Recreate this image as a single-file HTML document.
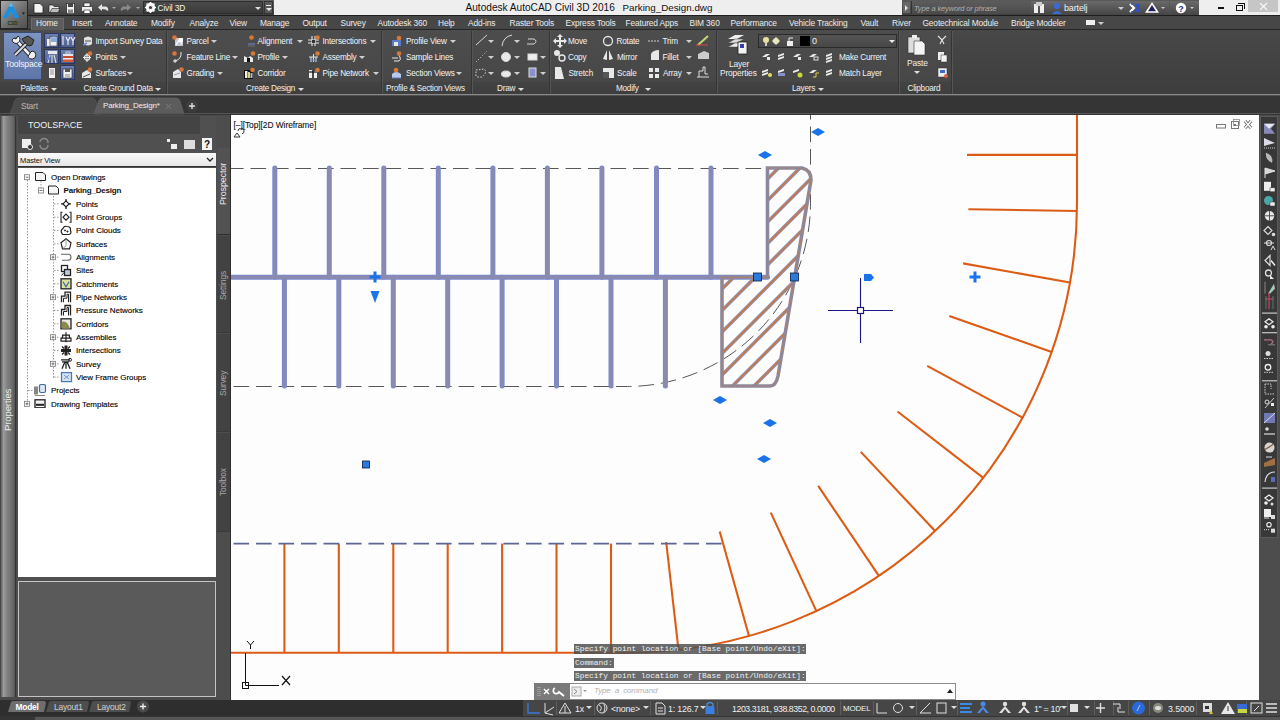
<!DOCTYPE html>
<html><head><meta charset="utf-8">
<style>
*{margin:0;padding:0;box-sizing:border-box}
html,body{width:1280px;height:720px;overflow:hidden;background:#3b3b3b;font-family:"Liberation Sans",sans-serif;}
.a{position:absolute;white-space:nowrap}
.t{position:absolute;white-space:nowrap;color:#f0f0f0;font-size:9px;line-height:10px;letter-spacing:-0.15px}
.dd{position:absolute;width:0;height:0;border-left:3px solid transparent;border-right:3px solid transparent;border-top:3px solid #d8d8d8}
</style></head><body>
<!-- title bar -->
<div class="a" style="left:0;top:0;width:1280px;height:16px;background:linear-gradient(#626262,#3e3e3e)"></div>
<div class="a" style="left:0;top:15px;width:1280px;height:1px;background:#1e1e1e"></div>
<div class="a" style="left:274px;top:0;width:628px;height:15px;background:#eeeeee"></div>
<div class="a" style="left:1199px;top:0;width:81px;height:15px;background:#eeeeee"></div>
<div class="a" style="left:1248px;top:0;width:30px;height:12px;background:#c6c6c6"></div>
<svg class="a" style="left:1258px;top:1px" width="11" height="11" viewBox="0 0 11 11"><path d="M2 2 L9 9 M9 2 L2 9" stroke="#f6f6f6" stroke-width="1.3"/></svg>
<div class="a" style="left:1218px;top:7px;width:6px;height:2px;background:#111"></div>
<div class="a" style="left:1236px;top:5px;width:7px;height:6px;border:1.5px solid #111"></div>
<div class="a" style="left:1238px;top:3px;width:7px;height:6px;border-top:1.5px solid #111;border-right:1.5px solid #111"></div>
<div class="t" style="left:465.5px;top:2px;font-size:10.1px;line-height:12px;color:#111;letter-spacing:0">Autodesk AutoCAD Civil 3D 2016</div>
<div class="t" style="left:622.5px;top:2px;font-size:9.8px;line-height:12px;color:#111;letter-spacing:0">Parking_Design.dwg</div>
<!-- app button -->
<div class="a" style="left:0;top:0;width:28px;height:29px;background:linear-gradient(135deg,#a8a8a8,#6a6a6a 60%,#505050);border:1px solid #252525"></div>
<svg class="a" style="left:0px;top:0px" width="28" height="28" viewBox="0 0 28 28"><path d="M11 2.5 L19.5 18 L14.5 18 L11 11.5 L7.5 18 L2.5 18 Z" fill="#1d8ee0"/><path d="M11 2.5 L13 6.5 L9 6.5Z" fill="#6ac0f0"/><text x="7.5" y="24.5" font-size="5" fill="#1a3a1a" font-family="Liberation Sans" font-weight="bold">C3D</text><path d="M22 12.5 L25 12.5 L23.5 14.5Z" fill="#111"/></svg>
<!-- QAT -->
<svg class="a" style="left:30px;top:1px" width="245" height="14" viewBox="0 0 245 14">
<path d="M4 2.5 L10 2.5 L13 5.5 L13 12 L4 12Z" fill="#f4f4f4" stroke="#222" stroke-width="0.8"/>
<path d="M19 4 L23 4 L24 5.5 L29 5.5 L29 11.5 L19 11.5Z" fill="#e8e8e8" stroke="#222" stroke-width="0.7"/><path d="M20 11.5 L22 7.5 L30 7.5 L28 11.5Z" fill="#bdbdbd" stroke="#222" stroke-width="0.6"/>
<rect x="36.5" y="2.5" width="8" height="10" fill="#f0f0f0" stroke="#222" stroke-width="0.7"/><rect x="38" y="2.5" width="5" height="3.5" fill="#444"/><rect x="38" y="8.5" width="5" height="4" fill="#888"/>
<rect x="51.5" y="5.5" width="11" height="5" rx="1" fill="#eee" stroke="#222" stroke-width="0.7"/><rect x="54" y="2" width="6" height="3.5" fill="#f4f4f4" stroke="#222" stroke-width="0.6"/><rect x="54" y="9" width="6" height="3.5" fill="#fff" stroke="#222" stroke-width="0.6"/>
<path d="M68 6.5 L72 3 L72 5.5 L76 5.5 Q79 6.5 78 10 Q76 8 72 8 L72 10Z" fill="#e4e4e4"/>
<path d="M82 6 L86 6 L84 8Z" fill="#aaa"/>
<path d="M101 6.5 L97 3 L97 5.5 L93 5.5 Q90 6.5 91 10 Q93 8 97 8 L97 10Z" fill="#8a8a8a"/>
<path d="M106 6 L110 6 L108 8Z" fill="#aaa"/>
</svg>
<div class="a" style="left:143px;top:1px;width:120px;height:13px;background:linear-gradient(#4a4a4a,#3a3a3a);border:1px solid #2e2e2e"></div>
<svg class="a" style="left:145px;top:2px" width="11" height="11" viewBox="0 0 11 11"><circle cx="5.5" cy="5.5" r="3.6" fill="none" stroke="#fff" stroke-width="2.2"/><path d="M5.5 0 L5.5 11 M0 5.5 L11 5.5 M1.6 1.6 L9.4 9.4 M9.4 1.6 L1.6 9.4" stroke="#fff" stroke-width="1.6"/><circle cx="5.5" cy="5.5" r="1.6" fill="#3e3e3e"/></svg>
<div class="t" style="left:157.5px;top:2px;font-size:8.4px;line-height:12px;color:#f4f4f4">Civil 3D</div>
<div class="dd" style="left:255px;top:7px;border-top-color:#ddd"></div>
<div class="a" style="left:264px;top:1px;width:9px;height:13px;background:#5a5a5a;border:1px solid #333"></div>
<div class="a" style="left:266px;top:5px;width:5px;height:1px;background:#eee"></div>
<div class="dd" style="left:265.5px;top:8px;border-top-color:#eee"></div>
<!-- search / user -->
<div class="a" style="left:902px;top:0;width:297px;height:15px;background:linear-gradient(#5a5a5a,#404040)"></div><div class="a" style="left:1031px;top:1px;width:168px;height:14px;background:linear-gradient(#6a6a6a,#454545)"></div>
<div class="a" style="left:911px;top:1px;width:120px;height:13px;background:linear-gradient(#5c5c5c,#4a4a4a);border-left:1px solid #333"></div>
<div class="a" style="left:903px;top:2px;width:7px;height:11px;background:#666"></div>
<div class="a" style="left:905px;top:5px;border-left:3px solid #ddd;border-top:3px solid transparent;border-bottom:3px solid transparent"></div>
<div class="t" style="left:914px;top:4px;font-size:7.5px;color:#b0b0b0;font-style:italic">Type a keyword or phrase</div>

<svg class="a" style="left:1032px;top:1px" width="170" height="14" viewBox="0 0 170 14">
<rect x="2" y="3" width="4" height="9" fill="#eee"/><rect x="8" y="3" width="4" height="9" fill="#eee"/><rect x="4" y="1" width="6" height="4" fill="#ccc"/>
<circle cx="25" cy="5" r="3" fill="#3a6ad8"/><path d="M20 13 Q25 7 30 13Z" fill="#3a6ad8"/>
<path d="M98 3 L102 7 L98 11" stroke="#fff" stroke-width="2.2" fill="none"/><path d="M103 3 L108 3 L108 11 L103 11 L105 7Z" fill="#3050c8"/><path d="M99 3 L101 3 M99 11 L101 11" stroke="#3050c8" stroke-width="1.5"/>
<path d="M120 2.5 L125.5 11 L114.5 11Z" fill="#20205a" stroke="#fff" stroke-width="1.6"/><path d="M129 6 L133 6 L131 8Z" fill="#ccc"/>
<rect x="137" y="1" width="1" height="12" fill="#555"/>
<circle cx="149" cy="7" r="5.2" fill="#fff"/><text x="146.2" y="10.5" font-size="9" font-weight="bold" fill="#2a2a8a" font-family="Liberation Sans">?</text>
<path d="M158 6 L162 6 L160 8Z" fill="#ccc"/>
</svg>
<div class="t" style="left:1064px;top:3px;font-size:9px;color:#f0f0f0">bartelj</div>
<div class="dd" style="left:1118px;top:7px;border-top-color:#ccc"></div>
<!-- tabs row -->
<div class="a" style="left:28px;top:16px;width:1252px;height:14px;background:#474747"></div>
<div class="a" style="left:0;top:29px;width:1280px;height:1px;background:#262626"></div>
<div class="a" style="left:31px;top:18px;width:33px;height:12px;background:#5c5c5c;border:1px solid #6a6a6a;border-bottom:none"></div>
<div class="t" style="left:36px;top:18px;font-size:8.4px;color:#ececec">Home</div>
<div class="t" style="left:72px;top:18px;font-size:8.4px;color:#ececec">Insert</div>
<div class="t" style="left:105px;top:18px;font-size:8.4px;color:#ececec">Annotate</div>
<div class="t" style="left:151px;top:18px;font-size:8.4px;color:#ececec">Modify</div>
<div class="t" style="left:189.5px;top:18px;font-size:8.4px;color:#ececec">Analyze</div>
<div class="t" style="left:229.5px;top:18px;font-size:8.4px;color:#ececec">View</div>
<div class="t" style="left:260px;top:18px;font-size:8.4px;color:#ececec">Manage</div>
<div class="t" style="left:302.5px;top:18px;font-size:8.4px;color:#ececec">Output</div>
<div class="t" style="left:340.5px;top:18px;font-size:8.4px;color:#ececec">Survey</div>
<div class="t" style="left:377.5px;top:18px;font-size:8.4px;color:#ececec">Autodesk 360</div>
<div class="t" style="left:438px;top:18px;font-size:8.4px;color:#ececec">Help</div>
<div class="t" style="left:468px;top:18px;font-size:8.4px;color:#ececec">Add-ins</div>
<div class="t" style="left:509.5px;top:18px;font-size:8.4px;color:#ececec">Raster Tools</div>
<div class="t" style="left:565.5px;top:18px;font-size:8.4px;color:#ececec">Express Tools</div>
<div class="t" style="left:625.5px;top:18px;font-size:8.4px;color:#ececec">Featured Apps</div>
<div class="t" style="left:689.5px;top:18px;font-size:8.4px;color:#ececec">BIM 360</div>
<div class="t" style="left:730.5px;top:18px;font-size:8.4px;color:#ececec">Performance</div>
<div class="t" style="left:789px;top:18px;font-size:8.4px;color:#ececec">Vehicle Tracking</div>
<div class="t" style="left:860.5px;top:18px;font-size:8.4px;color:#ececec">Vault</div>
<div class="t" style="left:892px;top:18px;font-size:8.4px;color:#ececec">River</div>
<div class="t" style="left:922.5px;top:18px;font-size:8.4px;color:#ececec">Geotechnical Module</div>
<div class="t" style="left:1011px;top:18px;font-size:8.4px;color:#ececec">Bridge Modeler</div>
<div class="a" style="left:1086px;top:20px;width:9px;height:5px;background:#eee"></div><div class="dd" style="left:1098px;top:22px;border-top-color:#ccc"></div>
<!-- ribbon -->
<div class="a" style="left:0;top:30px;width:1280px;height:65px;background:linear-gradient(#484848,#3d3d3d)"></div>
<div class="a" style="left:0;top:30px;width:951px;height:52px;background:linear-gradient(#4d4d4d,#474747)"></div>
<div class="a" style="left:0;top:82px;width:951px;height:12px;background:linear-gradient(#434343,#3e3e3e)"></div>
<div class="a" style="left:0;top:94px;width:1280px;height:1px;background:#8a8a8a"></div><div class="a" style="left:0;top:95px;width:1280px;height:1px;background:#505050"></div>
<div class="a" style="left:166px;top:31px;width:1px;height:63px;background:#353535"></div><div class="a" style="left:167px;top:31px;width:1px;height:63px;background:#565656"></div>
<div class="a" style="left:381px;top:31px;width:1px;height:63px;background:#353535"></div><div class="a" style="left:382px;top:31px;width:1px;height:63px;background:#565656"></div>
<div class="a" style="left:470.5px;top:31px;width:1px;height:63px;background:#353535"></div><div class="a" style="left:471.5px;top:31px;width:1px;height:63px;background:#565656"></div>
<div class="a" style="left:549px;top:31px;width:1px;height:63px;background:#353535"></div><div class="a" style="left:550px;top:31px;width:1px;height:63px;background:#565656"></div>
<div class="a" style="left:716px;top:31px;width:1px;height:63px;background:#353535"></div><div class="a" style="left:717px;top:31px;width:1px;height:63px;background:#565656"></div>
<div class="a" style="left:898px;top:31px;width:1px;height:63px;background:#353535"></div><div class="a" style="left:899px;top:31px;width:1px;height:63px;background:#565656"></div>
<div class="a" style="left:951px;top:31px;width:1px;height:63px;background:#353535"></div><div class="a" style="left:952px;top:31px;width:1px;height:63px;background:#565656"></div>
<div class="a" style="left:3px;top:32px;width:39px;height:48px;background:linear-gradient(#7d93c0,#5d75a8);border:1px solid #3a4a70"></div>
<svg class="a" style="left:9px;top:34px" width="28" height="26" viewBox="0 0 28 26">
<path d="M7 6 L20 20" stroke="#222" stroke-width="4.5" stroke-linecap="round"/><path d="M7 6 L20 20" stroke="#f0f0f0" stroke-width="2.6" stroke-linecap="round"/>
<path d="M3 6 A4 4 0 1 0 9 2 L7 5 L5 4Z" fill="#f0f0f0" stroke="#222" stroke-width="1"/>
<path d="M19 22 A4 4 0 1 0 23 17 L21 19 L20 21Z" fill="#f0f0f0" stroke="#222" stroke-width="1"/>
<path d="M6 21 L18 9" stroke="#222" stroke-width="4"/><path d="M6 21 L18 9" stroke="#d8d8d8" stroke-width="2.2"/>
<path d="M13 5 L19 2 L25 6 L23 11 L20 12 L15 8Z" fill="#555" stroke="#222" stroke-width="1"/>
</svg>
<div class="a" style="left:44px;top:33px;width:15px;height:15px;background:linear-gradient(#6d80b0,#4e5f90);border:1px solid #2a3660"></div><div class="a" style="left:60px;top:33px;width:15px;height:15px;background:linear-gradient(#6d80b0,#4e5f90);border:1px solid #2a3660"></div><div class="a" style="left:44px;top:49px;width:15px;height:15px;background:linear-gradient(#6d80b0,#4e5f90);border:1px solid #2a3660"></div><div class="a" style="left:60px;top:49px;width:15px;height:15px;background:linear-gradient(#6d80b0,#4e5f90);border:1px solid #2a3660"></div><div class="a" style="left:60px;top:65px;width:15px;height:15px;background:linear-gradient(#6d80b0,#4e5f90);border:1px solid #2a3660"></div><svg class="a" style="left:44px;top:33px" width="32" height="47" viewBox="0 0 32 47">
<rect x="3" y="6" width="3" height="7" fill="#eee"/><rect x="6" y="4" width="7" height="9" fill="#f2f2f2" stroke="#333" stroke-width="0.6"/><ellipse cx="10" cy="5" rx="3" ry="1.5" fill="#9ab8e0"/><rect x="7" y="5" width="6" height="4" fill="#8aa8d8"/>
<path d="M19 3 L19 12 M22 4 L24 8 L24 12 M26 4 L24 8 M27 4 L29 8 L29 12 M31 4 L29 8" stroke="#f0f0f0" stroke-width="1.1" fill="none"/>
<rect x="4" y="18" width="9" height="3" fill="#e8e8e8"/><path d="M4 30 L6 22 M8 30 L8 22 M12 30 L10 22" stroke="#ddd" stroke-width="1.1"/><rect x="3" y="24" width="3" height="3" fill="#5a8ad8"/>
<rect x="19" y="21" width="10" height="8" fill="#e8e8e8"/><rect x="19" y="23" width="10" height="2" fill="#c84a2a"/><rect x="19" y="26.5" width="10" height="2.5" fill="#d85a3a"/><rect x="22" y="19" width="4" height="2" fill="none" stroke="#ddd" stroke-width="0.8"/>
<rect x="5" y="35" width="6" height="10" fill="#f0f0f0"/><path d="M6 37 L10 37 M6 39 L10 39 M6 41 L10 41" stroke="#555" stroke-width="0.6"/>
<rect x="19" y="36" width="9" height="9" fill="#f0f0f0" stroke="#222" stroke-width="0.6"/><rect x="21" y="36" width="5" height="3" fill="#555"/><rect x="21" y="41" width="5" height="4" fill="#bbb"/>
</svg>
<div class="a" style="left:758px;top:34px;width:139px;height:14px;background:linear-gradient(#555,#474747);border:1px solid #2a2a2a"></div>
<div class="a" style="left:800px;top:36px;width:10px;height:10px;background:#000"></div>
<div class="t" style="left:5px;top:59px;font-size:8.6px;color:#f4f4f4;">Toolspace</div>
<svg class="a" style="left:82px;top:35px" width="12" height="12" viewBox="0 0 12 12"><path d="M2 3 Q6 0 10 3 L10 9 Q6 12 2 9Z" fill="#e0e0e0"/><path d="M3 6 L9 6" stroke="#555"/><path d="M1 10 L5 8" stroke="#6a8ad0" stroke-width="1.5"/></svg>
<div class="t" style="left:95.5px;top:37px;font-size:8.2px;color:#f4f4f4;letter-spacing:-0.2px;">Import Survey Data</div>
<svg class="a" style="left:81px;top:51px" width="12" height="12" viewBox="0 0 12 12"><path d="M6 2 L6 11 M2 6.5 L10 6.5" stroke="#eee" stroke-width="1"/><circle cx="6" cy="6.5" r="2.6" fill="none" stroke="#eee" stroke-width="1.2"/><circle cx="9" cy="2.5" r="2.3" fill="#d87838"/></svg>
<div class="t" style="left:95.5px;top:53px;font-size:8.2px;color:#f4f4f4;letter-spacing:-0.2px;">Points</div>
<div class="dd" style="left:120px;top:56px;border-top-color:#d0d0d0"></div>
<svg class="a" style="left:81px;top:67px" width="12" height="12" viewBox="0 0 12 12"><path d="M1 11 L1 6 L6 3 L10 6 L10 11Z" fill="#e8e8e8"/><path d="M2 10 L9 7" stroke="#555"/><circle cx="9" cy="2.5" r="2.3" fill="#d87838"/></svg>
<div class="t" style="left:95.5px;top:69px;font-size:8.2px;color:#f4f4f4;letter-spacing:-0.2px;">Surfaces</div>
<div class="dd" style="left:127px;top:72px;border-top-color:#d0d0d0"></div>
<div class="t" style="left:20.5px;top:84px;font-size:8.2px;letter-spacing:-0.25px;color:#f0f0f0;">Palettes</div>
<div class="dd" style="left:51px;top:88px;border-top-color:#e0e0e0"></div>
<div class="t" style="left:83.5px;top:84px;font-size:8.2px;letter-spacing:-0.25px;color:#f0f0f0;">Create Ground Data</div>
<div class="dd" style="left:155px;top:88px;border-top-color:#e0e0e0"></div>
<svg class="a" style="left:172px;top:35px" width="12" height="12" viewBox="0 0 12 12"><rect x="3" y="3" width="8" height="8" fill="#c8c8d8"/><path d="M4 10 L7 5 L10 9" stroke="#fff" stroke-width="1.2" fill="none"/><rect x="7" y="3" width="4" height="4" fill="#fff"/><circle cx="2.5" cy="2.5" r="2.3" fill="#d87838"/></svg>
<div class="t" style="left:186.5px;top:37px;font-size:8.2px;color:#f4f4f4;letter-spacing:-0.2px;">Parcel</div>
<div class="dd" style="left:210.5px;top:40px;border-top-color:#d0d0d0"></div>
<svg class="a" style="left:172px;top:51px" width="12" height="12" viewBox="0 0 12 12"><path d="M9 1 Q10 8 3 10" stroke="#e8e8e8" fill="none" stroke-width="1"/><path d="M1 10 L5 10 M3 8 L3 12" stroke="#eee"/><circle cx="2.5" cy="2.5" r="2.3" fill="#d87838"/></svg>
<div class="t" style="left:186.5px;top:53px;font-size:8.2px;color:#f4f4f4;letter-spacing:-0.2px;">Feature Line</div>
<div class="dd" style="left:232px;top:56px;border-top-color:#d0d0d0"></div>
<svg class="a" style="left:172px;top:67px" width="12" height="12" viewBox="0 0 12 12"><path d="M1 11 L1 5 L6 2 L9 5 L9 11Z" fill="#e8e8e8"/><path d="M2 8 L8 6" stroke="#999"/><circle cx="9.5" cy="2.5" r="2.3" fill="#d87838"/></svg>
<div class="t" style="left:186.5px;top:69px;font-size:8.2px;color:#f4f4f4;letter-spacing:-0.2px;">Grading</div>
<div class="dd" style="left:217px;top:72px;border-top-color:#d0d0d0"></div>
<svg class="a" style="left:244px;top:35px" width="12" height="12" viewBox="0 0 12 12"><path d="M4 9 L11 9" stroke="#6a7ab8" stroke-width="1.3"/><path d="M4 11 L11 11" stroke="#888" stroke-width="0.6"/><circle cx="7.5" cy="2.5" r="2.3" fill="#d87838"/></svg>
<div class="t" style="left:257.5px;top:37px;font-size:8.2px;color:#f4f4f4;letter-spacing:-0.2px;">Alignment</div>
<div class="dd" style="left:297px;top:40px;border-top-color:#d0d0d0"></div>
<svg class="a" style="left:244px;top:51px" width="12" height="12" viewBox="0 0 12 12"><path d="M0 11 L0 5 L4 7 L6 5 L9 7 L9 11Z" fill="#e8e8e8"/><rect x="3" y="7" width="3" height="4" fill="#111"/><circle cx="9" cy="2.5" r="2.3" fill="#d87838"/></svg>
<div class="t" style="left:257.5px;top:53px;font-size:8.2px;color:#f4f4f4;letter-spacing:-0.2px;">Profile</div>
<div class="dd" style="left:282px;top:56px;border-top-color:#d0d0d0"></div>
<svg class="a" style="left:244px;top:67px" width="12" height="12" viewBox="0 0 12 12"><rect x="0" y="3" width="9" height="9" fill="#111"/><rect x="1" y="4" width="2.5" height="7" fill="#eee"/><rect x="4" y="5" width="2" height="6" fill="#d8d080"/><rect x="6.5" y="6" width="2" height="5" fill="#bbb"/><circle cx="8.5" cy="3" r="2.3" fill="#d87838"/></svg>
<div class="t" style="left:257.5px;top:69px;font-size:8.2px;color:#f4f4f4;letter-spacing:-0.2px;">Corridor</div>
<svg class="a" style="left:308px;top:35px" width="12" height="12" viewBox="0 0 12 12"><path d="M4 1 L4 11 M7 1 L7 11 M0 5 L11 5 M0 8 L11 8" stroke="#e8e8e8" stroke-width="1.1"/><rect x="4" y="5" width="3" height="3" fill="#333"/><circle cx="9.5" cy="2.5" r="2.3" fill="#d87838"/></svg>
<div class="t" style="left:322.5px;top:37px;font-size:8.2px;color:#f4f4f4;letter-spacing:-0.2px;">Intersections</div>
<div class="dd" style="left:370px;top:40px;border-top-color:#d0d0d0"></div>
<svg class="a" style="left:308px;top:51px" width="12" height="12" viewBox="0 0 12 12"><path d="M1 6 L10 6 M3 6 L3 11 M8 6 L8 11 M5.5 3 L5.5 11" stroke="#e0e0e0" stroke-width="1.1"/><path d="M2 9 L9 9" stroke="#6a8ad0"/><circle cx="9.5" cy="2.5" r="2.3" fill="#d87838"/></svg>
<div class="t" style="left:322.5px;top:53px;font-size:8.2px;color:#f4f4f4;letter-spacing:-0.2px;">Assembly</div>
<div class="dd" style="left:359px;top:56px;border-top-color:#d0d0d0"></div>
<svg class="a" style="left:308px;top:67px" width="12" height="12" viewBox="0 0 12 12"><rect x="1" y="3" width="3" height="8" fill="#eee"/><rect x="6" y="4" width="3" height="7" fill="#eee"/><path d="M1 5 L9 5" stroke="#111" stroke-width="1.2"/><circle cx="9.5" cy="3" r="2.3" fill="#d87838"/></svg>
<div class="t" style="left:322.5px;top:69px;font-size:8.2px;color:#f4f4f4;letter-spacing:-0.2px;">Pipe Network</div>
<div class="dd" style="left:373px;top:72px;border-top-color:#d0d0d0"></div>
<div class="t" style="left:246px;top:84px;font-size:8.2px;letter-spacing:-0.25px;color:#f0f0f0;">Create Design</div>
<div class="dd" style="left:298px;top:88px;border-top-color:#e0e0e0"></div>
<svg class="a" style="left:391px;top:35px" width="12" height="12" viewBox="0 0 12 12"><rect x="1" y="5" width="9" height="6" fill="#5a7ac8"/><rect x="3" y="7" width="4" height="4" fill="#e8e8e8"/><circle cx="8" cy="3" r="2.3" fill="#d87838"/></svg>
<div class="t" style="left:406px;top:37px;font-size:8.2px;color:#f4f4f4;letter-spacing:-0.2px;">Profile View</div>
<div class="dd" style="left:450px;top:40px;border-top-color:#d0d0d0"></div>
<svg class="a" style="left:391px;top:51px" width="12" height="12" viewBox="0 0 12 12"><path d="M1 7 L7 7 M3 10 L8 10 Q10 9 9 6 L7 3" stroke="#e8e8e8" fill="none" stroke-width="1"/><circle cx="8" cy="2.5" r="2.3" fill="#d87838"/></svg>
<div class="t" style="left:406px;top:53px;font-size:8.2px;color:#f4f4f4;letter-spacing:-0.2px;">Sample Lines</div>
<svg class="a" style="left:391px;top:67px" width="12" height="12" viewBox="0 0 12 12"><path d="M1 11 L1 7 Q5 3 10 7 L10 11Z" fill="#b8c8e8"/><path d="M1 11 L10 11" stroke="#5a7ac8"/><circle cx="5" cy="3" r="2.3" fill="#d87838"/></svg>
<div class="t" style="left:406px;top:69px;font-size:8.2px;color:#f4f4f4;letter-spacing:-0.2px;">Section Views</div>
<div class="dd" style="left:456px;top:72px;border-top-color:#d0d0d0"></div>
<div class="t" style="left:386px;top:84px;font-size:8.2px;letter-spacing:-0.25px;color:#f0f0f0;">Profile &amp; Section Views</div>
<svg class="a" style="left:472px;top:32px" width="78" height="50" viewBox="0 0 78 50">
<g stroke="#d8d8d8" fill="none" stroke-width="1">
<path d="M4 13 L15 3"/><path d="M30 14 Q31 5 40 3"/><path d="M56 7 L62 7 Q66 9 62 12 L55 12"/>
<path d="M4 30 L15 19" stroke-dasharray="1 2"/><circle cx="34" cy="25" r="4.5" fill="#e8e8e8"/><rect x="56" y="22" width="9" height="6" fill="#eee"/>
<path d="M4 44 L4 38 L12 37 Q16 40 10 45 L4 45" stroke-dasharray="1.5 1.5"/><ellipse cx="34" cy="42" rx="4.5" ry="3" fill="#e8e8e8"/><rect x="57" y="36" width="7" height="9" fill="#8a90d0" stroke="#ddd"/>
</g></svg>
<div class="dd" style="left:488px;top:40px;border-top-color:#d0d0d0"></div>
<div class="dd" style="left:488px;top:56px;border-top-color:#d0d0d0"></div>
<div class="dd" style="left:488px;top:72px;border-top-color:#d0d0d0"></div>
<div class="dd" style="left:514px;top:40px;border-top-color:#d0d0d0"></div>
<div class="dd" style="left:514px;top:56px;border-top-color:#d0d0d0"></div>
<div class="dd" style="left:514px;top:72px;border-top-color:#d0d0d0"></div>
<div class="dd" style="left:540px;top:56px;border-top-color:#d0d0d0"></div>
<div class="dd" style="left:540px;top:72px;border-top-color:#d0d0d0"></div>
<div class="t" style="left:497px;top:84px;font-size:8.2px;letter-spacing:-0.25px;color:#f0f0f0;">Draw</div>
<div class="dd" style="left:518px;top:88px;border-top-color:#e0e0e0"></div>
<svg class="a" style="left:552px;top:33px" width="160" height="48" viewBox="0 0 160 48">
<g fill="#e8e8e8">
<path d="M8 1 L11 4 L9 4 L9 7 L12 7 L12 5 L15 8 L12 11 L12 9 L9 9 L9 12 L11 12 L8 15 L5 12 L7 12 L7 9 L4 9 L4 11 L1 8 L4 5 L4 7 L7 7 L7 4 L5 4Z"/>
<circle cx="5" cy="20" r="3"/><circle cx="10" cy="25" r="3" fill="none" stroke="#e8e8e8" stroke-width="1.4"/>
<path d="M3 34 L9 34 L12 46 L3 46Z"/>
<circle cx="56" cy="8" r="4.5" fill="none" stroke="#e8e8e8" stroke-width="1.3"/>
<path d="M51 26 L55 17 L55 27Z"/><path d="M57 27 L57 17 L61 26Z"/>
<rect x="51" y="35" width="11" height="10"/><rect x="51" y="39" width="6" height="6" fill="#555"/>
<path d="M96 8 L108 8" stroke="#ccc" stroke-dasharray="2 1"/>
<path d="M99 27 L99 21 Q101 17 107 17 L107 27Z"/>
<rect x="97" y="35" width="4" height="4"/><rect x="103" y="35" width="4" height="4"/><rect x="97" y="41" width="4" height="4"/><rect x="103" y="41" width="4" height="4"/>
<path d="M146 12 L156 3" stroke="#c8d870" stroke-width="2"/><path d="M144 12 L156 12" stroke="#d44" stroke-width="1"/>
<path d="M146 21 L152 18 L157 20 L157 26 L146 26Z" fill="#ccc"/>
<path d="M145 44 L157 44 M147 44 L147 38 L151 38 L151 34 L153 34 L153 41 L156 41" stroke="#ddd" fill="none"/>
</g></svg>
<div class="t" style="left:568px;top:37px;font-size:8.2px;color:#f4f4f4;letter-spacing:-0.2px;">Move</div>
<div class="t" style="left:568px;top:53px;font-size:8.2px;color:#f4f4f4;letter-spacing:-0.2px;">Copy</div>
<div class="t" style="left:568.5px;top:69px;font-size:8.2px;color:#f4f4f4;letter-spacing:-0.2px;">Stretch</div>
<div class="t" style="left:616.5px;top:37px;font-size:8.2px;color:#f4f4f4;letter-spacing:-0.2px;">Rotate</div>
<div class="t" style="left:617px;top:53px;font-size:8.2px;color:#f4f4f4;letter-spacing:-0.2px;">Mirror</div>
<div class="t" style="left:617px;top:69px;font-size:8.2px;color:#f4f4f4;letter-spacing:-0.2px;">Scale</div>
<div class="t" style="left:662.5px;top:37px;font-size:8.2px;color:#f4f4f4;letter-spacing:-0.2px;">Trim</div>
<div class="t" style="left:662.5px;top:53px;font-size:8.2px;color:#f4f4f4;letter-spacing:-0.2px;">Fillet</div>
<div class="t" style="left:663px;top:69px;font-size:8.2px;color:#f4f4f4;letter-spacing:-0.2px;">Array</div>
<div class="dd" style="left:685.5px;top:40px;border-top-color:#d0d0d0"></div>
<div class="dd" style="left:685.5px;top:56px;border-top-color:#d0d0d0"></div>
<div class="dd" style="left:685.5px;top:72px;border-top-color:#d0d0d0"></div>
<div class="t" style="left:616px;top:84px;font-size:8.2px;letter-spacing:-0.25px;color:#f0f0f0;">Modify</div>
<div class="dd" style="left:645px;top:88px;border-top-color:#e0e0e0"></div>
<svg class="a" style="left:726px;top:33px" width="24" height="22" viewBox="0 0 24 22">
<path d="M2 6 L9 2 L18 2 L11 6Z" fill="#eee"/><path d="M2 10 L9 6 L18 6 L11 10Z" fill="#ddd" stroke="#444" stroke-width="0.5"/><path d="M2 14 L9 10 L18 10 L11 14Z" fill="#eee" stroke="#444" stroke-width="0.5"/>
<rect x="12" y="9" width="9" height="12" fill="#f4f4f4" stroke="#222" stroke-width="0.8"/><rect x="14" y="11" width="4" height="4" fill="#3a3ab0"/>
</svg>
<div class="t" style="left:729px;top:58.5px;font-size:8.4px;color:#f0f0f0;">Layer</div>
<div class="t" style="left:720px;top:68px;font-size:8.4px;color:#f0f0f0;">Properties</div>
<svg class="a" style="left:760px;top:35px" width="40" height="12" viewBox="0 0 40 12"><circle cx="6" cy="5" r="3" fill="#e8e0a0"/><rect x="5" y="8" width="2" height="3" fill="#ccc"/><circle cx="16" cy="6" r="3" fill="#e8e8c0"/><path d="M12 6 L20 6 M16 2 L16 10" stroke="#e8e8c0"/><rect x="27" y="6" width="6" height="5" fill="#eee"/><path d="M29 6 L29 3 L33 3" stroke="#eee" fill="none"/></svg>
<div class="t" style="left:812px;top:36px;font-size:9px;color:#f0f0f0;">0</div>
<div class="dd" style="left:889px;top:40px;border-top-color:#eee"></div>
<svg class="a" style="left:760px;top:51px" width="80" height="28" viewBox="0 0 80 28">
<g fill="#e8e8e8">
<path d="M2 6 L6 3 L10 3 L6 6Z"/><rect x="7" y="6" width="3" height="3"/>
<path d="M18 4 L24 2 L24 4 L18 6Z M18 7 L24 5 L24 7 L18 9Z"/>
<path d="M33 6 L37 3 L41 3 L37 6Z"/><rect x="38" y="6" width="3" height="3"/>
<path d="M49 6 L53 3 L57 3 L53 6Z"/><rect x="54" y="6" width="4" height="3" fill="none" stroke="#ddd"/>
<path d="M66 4 L72 2 L72 4 L66 6Z M66 7 L72 5 L72 7 L66 9Z M66 10 L72 8 L72 10 L66 12Z"/>
<path d="M2 20 L8 18 L8 20 L2 22Z M2 23 L8 21 L8 23 L2 25Z"/><circle cx="10" cy="24" r="2" fill="#e0e060"/>
<path d="M18 20 L24 18 L24 20 L18 22Z" fill="#eee"/><rect x="18" y="22" width="7" height="3" fill="#8890d0"/>
<path d="M33 20 L39 18 L39 20 L33 22Z"/><circle cx="40" cy="24" r="2.5" fill="#c8d840"/>
<path d="M49 22 L53 19 L57 19 L53 22Z"/><path d="M53 26 L56 26 L56 22 L59 22" stroke="#e0d040" fill="none"/>
<path d="M66 20 L72 18 L72 20 L66 22Z M66 23 L72 21 L72 23 L66 25Z"/>
</g></svg>
<div class="t" style="left:839px;top:53px;font-size:8.2px;color:#f4f4f4;letter-spacing:-0.2px;">Make Current</div>
<div class="t" style="left:839px;top:69px;font-size:8.2px;color:#f4f4f4;letter-spacing:-0.2px;">Match Layer</div>
<div class="t" style="left:792px;top:84px;font-size:8.2px;letter-spacing:-0.25px;color:#f0f0f0;">Layers</div>
<div class="dd" style="left:818px;top:88px;border-top-color:#e0e0e0"></div>
<svg class="a" style="left:905px;top:33px" width="46" height="46" viewBox="0 0 46 46">
<rect x="3" y="4" width="12" height="16" fill="#ddd" stroke="#333" stroke-width="0.6"/><rect x="7" y="2" width="5" height="3" fill="#eee"/><path d="M9 8 L17 8 L20 11 L20 22 L9 22Z" fill="#f4f4f4" stroke="#333" stroke-width="0.6"/>
<path d="M33 3 L37 7 L41 3 M37 7 L35 11 M37 7 L39 11" stroke="#e8e8e8" fill="none" stroke-width="1.1"/>
<rect x="33" y="19" width="6" height="8" fill="#eee"/><rect x="36" y="22" width="6" height="7" fill="#f4f4f4" stroke="#333" stroke-width="0.5"/>
<rect x="33" y="35" width="9" height="9" fill="#eee" stroke="#333" stroke-width="0.5"/><rect x="35" y="37" width="5" height="3" fill="#3a6ad0"/><circle cx="41" cy="43" r="2" fill="#d86040"/>
</svg>
<div class="t" style="left:907px;top:58px;font-size:8.4px;color:#f0f0f0;">Paste</div>
<div class="dd" style="left:914px;top:71px;border-top-color:#ddd"></div>
<div class="t" style="left:907.5px;top:84px;font-size:8.2px;letter-spacing:-0.25px;color:#f0f0f0;">Clipboard</div>
<!-- file tabs -->
<div class="a" style="left:0;top:96px;width:1280px;height:19px;background:#353535"></div>
<svg class="a" style="left:0;top:96px" width="220" height="19" viewBox="0 0 220 19">
<path d="M10 18 L15 4 Q16 2 19 2 L92 2 Q95 2 96 5 L100 18Z" fill="#4a4a4a" stroke="#5a5a5a" stroke-width="0.6"/>
<path d="M94 18 L99 4 Q100 2 103 2 L176 2 Q179 2 180 5 L184 18Z" fill="#5c5c5c" stroke="#6a6a6a" stroke-width="0.6"/>
<circle cx="192" cy="10" r="6" fill="#3e3e3e"/>
<path d="M189 10 L195 10 M192 7 L192 13" stroke="#e0e0e0" stroke-width="1.4"/>
<path d="M166 8 L171 13 M171 8 L166 13" stroke="#7a7a7a" stroke-width="1"/>
</svg>
<div class="t" style="left:21px;top:101px;font-size:8.4px;color:#b8b8b8">Start</div>
<div class="t" style="left:103px;top:101px;font-size:8px;color:#f0f0f0;letter-spacing:-0.2px">Parking_Design*</div>
<!-- left palette -->
<div class="a" style="left:0;top:115px;width:231px;height:585px;background:#4a4a4a"></div>
<div class="a" style="left:1px;top:116px;width:14px;height:581px;background:linear-gradient(90deg,#5e5e5e 0,#9c9c9c 18%,#808080 45%,#6c6c6c 80%,#555 100%)"></div><div class="a" style="left:15px;top:116px;width:1px;height:581px;background:#353535"></div>
<div class="t" style="left:3px;top:431px;font-size:9.6px;color:#ececec;transform:rotate(-90deg);transform-origin:0 0">Properties</div>
<div class="a" style="left:17px;top:116px;width:200px;height:581px;background:#505050"></div>
<div class="a" style="left:18px;top:116px;width:182px;height:18px;background:#444"></div>
<div class="t" style="left:28px;top:120px;font-size:9px;line-height:11px;color:#f2f2f2;letter-spacing:0">TOOLSPACE</div>
<svg class="a" style="left:18px;top:136px" width="198" height="16" viewBox="0 0 198 16">
<rect x="4" y="3" width="9" height="9" fill="#eee"/><circle cx="12" cy="11" r="2.5" fill="#333" stroke="#eee"/>
<path d="M22 6 A4 4 0 0 1 30 7 M30 9 A4 4 0 0 1 22 9" stroke="#8a8a8a" stroke-width="1.6" fill="none"/>
<rect x="149" y="3" width="3" height="3" fill="#eee"/><rect x="153" y="8" width="6" height="5" fill="#eee"/>
<rect x="166" y="4" width="11" height="9" fill="#ddd"/>
<rect x="184" y="2" width="10" height="12" fill="#f4f4f4"/><text x="186" y="12" font-size="10" font-weight="bold" fill="#111" font-family="Liberation Sans">?</text>
</svg>
<div class="a" style="left:18px;top:153px;width:198px;height:14px;background:linear-gradient(#fafafa,#e6e6e6);border-bottom:1px solid #333"></div>
<div class="t" style="left:20px;top:156px;font-size:7.5px;color:#111;letter-spacing:-0.1px">Master View</div>
<svg class="a" style="left:206px;top:157px" width="8" height="6"><path d="M1 1 L4 4 L7 1" stroke="#222" stroke-width="1.3" fill="none"/></svg>
<div class="a" style="left:18px;top:168px;width:198px;height:409px;background:#ffffff"></div>
<div class="a" style="left:18px;top:581px;width:198px;height:116px;background:#5a5a5a;border:1px solid #c4c4c4"></div>
<svg class="a" style="left:18px;top:168px" width="198" height="240" viewBox="18 168 198 240">
<g stroke="#9a9a9a" stroke-width="1" stroke-dasharray="1.5 1.5" fill="none">
<path d="M27.5 180 L27.5 404"/><path d="M53.5 196 L53.5 378"/><path d="M41 181 L41 188"/>
<path d="M28 390.5 L33 390.5"/>
<path d="M54 203.9 L60 203.9"/><path d="M54 217.2 L60 217.2"/><path d="M54 230.5 L60 230.5"/><path d="M54 243.8 L60 243.8"/><path d="M54 257.2 L60 257.2"/><path d="M54 270.5 L60 270.5"/><path d="M54 283.8 L60 283.8"/><path d="M54 297.2 L60 297.2"/><path d="M54 310.5 L60 310.5"/><path d="M54 323.8 L60 323.8"/><path d="M54 337.2 L60 337.2"/><path d="M54 350.5 L60 350.5"/><path d="M54 363.8 L60 363.8"/><path d="M54 377.1 L60 377.1"/></g>
<g fill="#fff" stroke="#777" stroke-width="0.8"><rect x="24.5" y="174.7" width="5" height="5"/><rect x="38.5" y="188" width="5" height="5"/><rect x="50.5" y="254.7" width="5" height="5"/><rect x="50.5" y="294.7" width="5" height="5"/><rect x="50.5" y="334.7" width="5" height="5"/><rect x="50.5" y="361.3" width="5" height="5"/><rect x="24.5" y="401.3" width="5" height="5"/></g><g stroke="#555" stroke-width="0.8"><path d="M25.5 177.2 L28.5 177.2 M39.5 190.5 L42.5 190.5"/><path d="M51.5 257.2 L54.5 257.2 M53 255.7 L53 258.7"/><path d="M51.5 297.2 L54.5 297.2 M53 295.7 L53 298.7"/><path d="M51.5 337.2 L54.5 337.2 M53 335.7 L53 338.7"/><path d="M51.5 363.8 L54.5 363.8 M53 362.3 L53 365.3"/><path d="M25.5 403.8 L28.5 403.8 M27 402.3 L27 405.3"/></g>
<g fill="#f4f4f4" stroke="#222" stroke-width="1"><path d="M35.5 172.5 L43 172.5 L45.5 175 L45.5 180.5 L35.5 180.5Z"/><path d="M48.5 186 L56 186 L58.5 188.5 L58.5 194 L48.5 194Z"/></g>
<g fill="none" stroke="#222" stroke-width="1"><path d="M66 198.9 L66 208.9 M61 203.9 L71 203.9" stroke-width="1.3"/><path d="M66 200.9 L69 203.9 L66 206.9 L63 203.9Z" fill="#fff" stroke-width="1.2"/><path d="M62.5 212.2 L61 212.2 L61 222.2 L62.5 222.2 M69.5 212.2 L71 212.2 L71 222.2 L69.5 222.2" stroke-width="1.1"/><path d="M66 214.2 L69 217.2 L66 220.2 L63 217.2Z" stroke-width="1.2"/><path d="M62 233.5 Q60 230.5 63 228.5 Q64 225.5 67 226.5 Q71 226.5 70.5 230.5 Q72 233.5 69 234.5 L63 234.5 Q62 234.5 62 233.5Z" stroke-width="1.2"/><circle cx="65" cy="230.5" r="0.6" fill="#333"/><circle cx="67.5" cy="231.5" r="0.6" fill="#333"/><path d="M66 238.8 L71 242.8 L69.5 248.8 L62.5 248.8 L61 242.8Z" stroke-width="1.2"/><path d="M66 238.8 L66 245.8 L62.5 248.8" stroke="#888" stroke-width="0.8"/><path d="M61 254.2 L68 254.2 Q71 254.2 71 257.2 Q71 260.2 68 260.2 L62 260.2" stroke="#666" stroke-width="1.1"/><rect x="61.5" y="265.5" width="6" height="6" stroke-width="1.3"/><rect x="64.5" y="269.5" width="6" height="6" fill="#bcd" stroke-width="1.3"/><path d="M61.5 275.5 L64 272.5" stroke-width="1"/><rect x="61" y="278.8" width="10" height="10" fill="#dde0a0" stroke-width="1.3"/><path d="M63 281.8 L66 286.8 L69 281.8" stroke="#3a6a9a" stroke-width="1.2"/><path d="M61.5 302.2 L61.5 296.2 L65 296.2 L65 292.2 L70.5 292.2 L70.5 302.2" stroke-width="1.3"/><path d="M63.5 302.2 L63.5 298.2 L67 298.2 L67 294.2 L68.5 294.2 L68.5 302.2" stroke-width="1"/><path d="M61.5 315.5 L61.5 309.5 L65 309.5 L65 305.5 L70.5 305.5 L70.5 315.5" stroke-width="1.3"/><path d="M63.5 315.5 L63.5 311.5 L67 311.5 L67 307.5 L68.5 307.5 L68.5 315.5" stroke-width="1"/><rect x="61" y="318.8" width="10" height="10" fill="#e8e8e8" stroke-width="1.3"/><path d="M62 328.8 L62 321.8 Q67 319.8 70 328.8Z" fill="#8a8a50" stroke="none"/><path d="M66 332.2 L66 342.2 M62 335.2 L70 335.2 M61 338.2 L71 338.2 L71 341.2 L61 341.2Z M63 335.2 L62 338.2 M69 335.2 L70 338.2" stroke-width="1.2"/><path d="M66 345.5 L66 355.5 M61 350.5 L71 350.5" stroke-width="3"/><path d="M62 346.5 L64 348.5 M70 346.5 L68 348.5 M62 354.5 L64 352.5 M70 354.5 L68 352.5" stroke-width="1.3"/><path d="M61 359.8 L70 359.8 M62 361.8 L69 361.8 M65 361.8 L62 368.8 M66 361.8 L66 368.8 M67 361.8 L70 368.8" stroke-width="1.3"/><circle cx="70" cy="359.8" r="1.5" stroke-width="1"/><rect x="61.5" y="372.6" width="10" height="9" fill="#d8e4f0" stroke="#4a7ab0" stroke-width="1.3"/><path d="M64 375.1 L69 379.1 M69 375.1 L64 379.1" stroke="#4a7ab0" stroke-width="0.7"/><path d="M35 386.5 L35 394.5 M37 386.5 L37 394.5" stroke-width="1.1"/><rect x="39.5" y="384.5" width="6" height="8" rx="1.5" fill="#dde8f4" stroke="#3a6aa8" stroke-width="1.2"/><path d="M35 395.5 L45 395.5" stroke="#888"/><rect x="35" y="399.8" width="10" height="8" fill="#f4f4f4" stroke-width="1.3"/><path d="M36 404.8 L44 404.8" stroke-width="2"/></g>
</svg>
<div class="t" style="left:51px;top:173.0px;font-size:8px;color:#000;letter-spacing:-0.05px;-webkit-text-stroke:0.12px #000">Open Drawings</div>
<div class="t" style="left:63.5px;top:186.3px;font-size:8px;color:#111;font-weight:bold;letter-spacing:-0.2px">Parking_Design</div>
<div class="t" style="left:76px;top:199.7px;font-size:8px;color:#000;letter-spacing:-0.05px;-webkit-text-stroke:0.12px #000">Points</div>
<div class="t" style="left:76px;top:213.0px;font-size:8px;color:#000;letter-spacing:-0.05px;-webkit-text-stroke:0.12px #000">Point Groups</div>
<div class="t" style="left:76px;top:226.3px;font-size:8px;color:#000;letter-spacing:-0.05px;-webkit-text-stroke:0.12px #000">Point Clouds</div>
<div class="t" style="left:76px;top:239.6px;font-size:8px;color:#000;letter-spacing:-0.05px;-webkit-text-stroke:0.12px #000">Surfaces</div>
<div class="t" style="left:76px;top:253.0px;font-size:8px;color:#000;letter-spacing:-0.05px;-webkit-text-stroke:0.12px #000">Alignments</div>
<div class="t" style="left:76px;top:266.3px;font-size:8px;color:#000;letter-spacing:-0.05px;-webkit-text-stroke:0.12px #000">Sites</div>
<div class="t" style="left:76px;top:279.6px;font-size:8px;color:#000;letter-spacing:-0.05px;-webkit-text-stroke:0.12px #000">Catchments</div>
<div class="t" style="left:76px;top:293.0px;font-size:8px;color:#000;letter-spacing:-0.05px;-webkit-text-stroke:0.12px #000">Pipe Networks</div>
<div class="t" style="left:76px;top:306.3px;font-size:8px;color:#000;letter-spacing:-0.05px;-webkit-text-stroke:0.12px #000">Pressure Networks</div>
<div class="t" style="left:76px;top:319.6px;font-size:8px;color:#000;letter-spacing:-0.05px;-webkit-text-stroke:0.12px #000">Corridors</div>
<div class="t" style="left:76px;top:333.0px;font-size:8px;color:#000;letter-spacing:-0.05px;-webkit-text-stroke:0.12px #000">Assemblies</div>
<div class="t" style="left:76px;top:346.3px;font-size:8px;color:#000;letter-spacing:-0.05px;-webkit-text-stroke:0.12px #000">Intersections</div>
<div class="t" style="left:76px;top:359.6px;font-size:8px;color:#000;letter-spacing:-0.05px;-webkit-text-stroke:0.12px #000">Survey</div>
<div class="t" style="left:76px;top:372.9px;font-size:8px;color:#000;letter-spacing:-0.05px;-webkit-text-stroke:0.12px #000">View Frame Groups</div>
<div class="t" style="left:51px;top:386.3px;font-size:8px;color:#000;letter-spacing:-0.05px;-webkit-text-stroke:0.12px #000">Projects</div>
<div class="t" style="left:51px;top:399.6px;font-size:8px;color:#000;letter-spacing:-0.05px;-webkit-text-stroke:0.12px #000">Drawing Templates</div>
<div class="a" style="left:216px;top:116px;width:15px;height:584px;background:#4d4d4d"></div>
<div class="a" style="left:217px;top:148px;width:13px;height:87px;background:#525252;border-bottom:1px solid #2e2e2e"></div>
<div class="a" style="left:217px;top:236px;width:13px;height:97px;background:#424242;border-bottom:1px solid #3a3a3a"></div>
<div class="a" style="left:217px;top:334px;width:13px;height:98px;background:#424242;border-bottom:1px solid #3a3a3a"></div>
<div class="a" style="left:217px;top:433px;width:13px;height:99px;background:#424242;border-bottom:1px solid #3a3a3a"></div>
<div class="t" style="left:218px;top:205px;font-size:9px;color:#ececec;transform:rotate(-90deg);transform-origin:0 0">Prospector</div>
<div class="t" style="left:218px;top:300px;font-size:8.4px;color:#aaaaaa;transform:rotate(-90deg);transform-origin:0 0">Settings</div>
<div class="t" style="left:218px;top:396px;font-size:8.4px;color:#aaaaaa;transform:rotate(-90deg);transform-origin:0 0">Survey</div>
<div class="t" style="left:218px;top:496px;font-size:8.4px;color:#aaaaaa;transform:rotate(-90deg);transform-origin:0 0">Toolbox</div>
<div class="a" style="left:0;top:113px;width:1280px;height:1px;background:#555"></div>
<div class="a" style="left:230px;top:114px;width:1px;height:586px;background:#2e2e2e"></div>
<!-- drawing -->
<div class="a" style="left:231px;top:115px;width:1028px;height:585px;background:#fdfdfd"></div>
<svg class="a" style="left:0;top:0" width="1280" height="720" viewBox="0 0 1280 720">
<defs>
<clipPath id="dc"><rect x="231" y="115" width="1028" height="585"/></clipPath>
<clipPath id="hc"><path d="M767.5 168 L802 168 Q811 170 811 180 L778 376 Q776 386 770 386 L722 386 L722 277.3 L767.5 277.3 Z"/></clipPath>
</defs>
<style>
.or{stroke:#dc5c16;stroke-width:2.1;fill:none}
.bd{stroke:#5c6694;stroke-width:1.8;stroke-dasharray:15.6 6.9;fill:none}
.gd{stroke:#585858;stroke-width:1;stroke-dasharray:15.6 6.9;fill:none}
.hl{stroke:#8e92b8;stroke-width:3.6}
.hl2{stroke:#c47a48;stroke-width:1.6}
.hb2{stroke:#a88070;stroke-width:1.2;fill:none}
.hb{stroke:#8a8aa4;stroke-width:3.6;fill:none}
.sel line{stroke:#7a8ad0;stroke-width:5;stroke-linecap:round}
.sel2 line{stroke:#8c8aac;stroke-width:3;stroke-linecap:round}
</style>
<g clip-path="url(#dc)">
<path class="or" d="M1077 113 L1077 203.2 A449.5 449.5 0 0 1 627.5 652.7 L229 652.7"/>
<line x1="967.0" y1="154.9" x2="1077.0" y2="154.9" class="or"/>
<line x1="968.4" y1="209.2" x2="1076.9" y2="211.0" class="or"/>
<line x1="963.1" y1="263.4" x2="1069.9" y2="282.5" class="or"/>
<line x1="949.3" y1="316.1" x2="1051.7" y2="352.0" class="or"/>
<line x1="927.2" y1="365.9" x2="1022.5" y2="417.6" class="or"/>
<line x1="897.5" y1="411.5" x2="983.3" y2="477.8" class="or"/>
<line x1="860.8" y1="451.9" x2="935.1" y2="531.0" class="or"/>
<line x1="818.2" y1="485.9" x2="878.9" y2="575.8" class="or"/>
<line x1="770.8" y1="512.6" x2="816.4" y2="611.1" class="or"/>
<line x1="719.7" y1="531.5" x2="749.0" y2="636.0" class="or"/>
<line x1="666.2" y1="542.0" x2="678.5" y2="649.8" class="or"/>
<line x1="284.4" y1="543.6" x2="284.4" y2="652.7" class="or"/>
<line x1="338.8" y1="543.6" x2="338.8" y2="652.7" class="or"/>
<line x1="393.3" y1="543.6" x2="393.3" y2="652.7" class="or"/>
<line x1="447.7" y1="543.6" x2="447.7" y2="652.7" class="or"/>
<line x1="502.1" y1="543.6" x2="502.1" y2="652.7" class="or"/>
<line x1="556.5" y1="543.6" x2="556.5" y2="652.7" class="or"/>
<line x1="611.0" y1="543.6" x2="611.0" y2="652.7" class="or"/>
<line x1="233.5" y1="543.6" x2="722.0" y2="543.6" class="bd"/>
<path class="gd" d="M233.5 386.5 L627.5 386.5 A183.5 183.5 0 0 0 810.5 203.2 L810.5 113"/>
<line x1="228.0" y1="168.5" x2="767.0" y2="168.5" class="gd"/>
<g class="sel">
<line x1="274.8" y1="168.0" x2="274.8" y2="277.3"/>
<line x1="329.3" y1="168.0" x2="329.3" y2="277.3"/>
<line x1="383.8" y1="168.0" x2="383.8" y2="277.3"/>
<line x1="438.3" y1="168.0" x2="438.3" y2="277.3"/>
<line x1="492.9" y1="168.0" x2="492.9" y2="277.3"/>
<line x1="547.4" y1="168.0" x2="547.4" y2="277.3"/>
<line x1="601.9" y1="168.0" x2="601.9" y2="277.3"/>
<line x1="656.5" y1="168.0" x2="656.5" y2="277.3"/>
<line x1="711.0" y1="168.0" x2="711.0" y2="277.3"/>
<line x1="284.4" y1="277.3" x2="284.4" y2="386.0"/>
<line x1="338.8" y1="277.3" x2="338.8" y2="386.0"/>
<line x1="393.3" y1="277.3" x2="393.3" y2="386.0"/>
<line x1="447.7" y1="277.3" x2="447.7" y2="386.0"/>
<line x1="502.1" y1="277.3" x2="502.1" y2="386.0"/>
<line x1="556.5" y1="277.3" x2="556.5" y2="386.0"/>
<line x1="611.0" y1="277.3" x2="611.0" y2="386.0"/>
<line x1="665.4" y1="277.3" x2="665.4" y2="386.0"/>
<line x1="229.0" y1="277.3" x2="767.5" y2="277.3"/>
</g>
<g class="sel2">
<line x1="274.8" y1="168.0" x2="274.8" y2="277.3"/>
<line x1="329.3" y1="168.0" x2="329.3" y2="277.3"/>
<line x1="383.8" y1="168.0" x2="383.8" y2="277.3"/>
<line x1="438.3" y1="168.0" x2="438.3" y2="277.3"/>
<line x1="492.9" y1="168.0" x2="492.9" y2="277.3"/>
<line x1="547.4" y1="168.0" x2="547.4" y2="277.3"/>
<line x1="601.9" y1="168.0" x2="601.9" y2="277.3"/>
<line x1="656.5" y1="168.0" x2="656.5" y2="277.3"/>
<line x1="711.0" y1="168.0" x2="711.0" y2="277.3"/>
<line x1="284.4" y1="277.3" x2="284.4" y2="386.0"/>
<line x1="338.8" y1="277.3" x2="338.8" y2="386.0"/>
<line x1="393.3" y1="277.3" x2="393.3" y2="386.0"/>
<line x1="447.7" y1="277.3" x2="447.7" y2="386.0"/>
<line x1="502.1" y1="277.3" x2="502.1" y2="386.0"/>
<line x1="556.5" y1="277.3" x2="556.5" y2="386.0"/>
<line x1="611.0" y1="277.3" x2="611.0" y2="386.0"/>
<line x1="665.4" y1="277.3" x2="665.4" y2="386.0"/>
<line x1="229.0" y1="277.3" x2="767.5" y2="277.3"/>
</g>
<g clip-path="url(#hc)">
<line x1="525.0" y1="400" x2="775.0" y2="150" class="hl"/><line x1="525.0" y1="400" x2="775.0" y2="150" class="hl2"/>
<line x1="546.5" y1="400" x2="796.5" y2="150" class="hl"/><line x1="546.5" y1="400" x2="796.5" y2="150" class="hl2"/>
<line x1="568.0" y1="400" x2="818.0" y2="150" class="hl"/><line x1="568.0" y1="400" x2="818.0" y2="150" class="hl2"/>
<line x1="589.5" y1="400" x2="839.5" y2="150" class="hl"/><line x1="589.5" y1="400" x2="839.5" y2="150" class="hl2"/>
<line x1="611.0" y1="400" x2="861.0" y2="150" class="hl"/><line x1="611.0" y1="400" x2="861.0" y2="150" class="hl2"/>
<line x1="632.5" y1="400" x2="882.5" y2="150" class="hl"/><line x1="632.5" y1="400" x2="882.5" y2="150" class="hl2"/>
<line x1="654.0" y1="400" x2="904.0" y2="150" class="hl"/><line x1="654.0" y1="400" x2="904.0" y2="150" class="hl2"/>
<line x1="675.5" y1="400" x2="925.5" y2="150" class="hl"/><line x1="675.5" y1="400" x2="925.5" y2="150" class="hl2"/>
<line x1="697.0" y1="400" x2="947.0" y2="150" class="hl"/><line x1="697.0" y1="400" x2="947.0" y2="150" class="hl2"/>
<line x1="718.5" y1="400" x2="968.5" y2="150" class="hl"/><line x1="718.5" y1="400" x2="968.5" y2="150" class="hl2"/>
<line x1="740.0" y1="400" x2="990.0" y2="150" class="hl"/><line x1="740.0" y1="400" x2="990.0" y2="150" class="hl2"/>
<line x1="761.5" y1="400" x2="1011.5" y2="150" class="hl"/><line x1="761.5" y1="400" x2="1011.5" y2="150" class="hl2"/>
<line x1="783.0" y1="400" x2="1033.0" y2="150" class="hl"/><line x1="783.0" y1="400" x2="1033.0" y2="150" class="hl2"/>
<line x1="804.5" y1="400" x2="1054.5" y2="150" class="hl"/><line x1="804.5" y1="400" x2="1054.5" y2="150" class="hl2"/>
<line x1="826.0" y1="400" x2="1076.0" y2="150" class="hl"/><line x1="826.0" y1="400" x2="1076.0" y2="150" class="hl2"/>
</g>
<path d="M767.5 168 L802 168 Q811 170 811 180 L778 376 Q776 386 770 386 L722 386 L722 277.3 L767.5 277.3 Z" class="hb"/><path d="M767.5 168 L802 168 Q811 170 811 180 L778 376 Q776 386 770 386 L722 386 L722 277.3 L767.5 277.3 Z" class="hb2"/>
</g>
</svg>
<!-- drawing overlays -->
<div class="t" style="left:233.5px;top:120px;font-size:8.4px;color:#111;letter-spacing:-0.05px;-webkit-text-stroke:0.1px #111">[&#8211;][Top][2D Wireframe]</div>
<svg class="a" style="left:233px;top:128px" width="12" height="10"><path d="M1 9 L4 5 L7 9Z M5 3 A3 3 0 1 1 9 6" stroke="#333" fill="none" stroke-width="1"/></svg>
<svg class="a" style="left:1214px;top:118px" width="40" height="14" viewBox="1214 118 40 14">
<rect x="1216.5" y="124.5" width="9" height="3.5" fill="#fff" stroke="#777" stroke-width="1"/>
<rect x="1231.5" y="121.5" width="7" height="7" fill="#fff" stroke="#777" stroke-width="1"/><rect x="1233.5" y="119.5" width="6" height="6" fill="none" stroke="#888" stroke-width="0.8"/><circle cx="1235" cy="125" r="1" fill="#555"/>
<path d="M1245 121 L1251 128 M1251 121 L1245 128" stroke="#666" stroke-width="3.2"/><path d="M1245 121 L1251 128 M1251 121 L1245 128" stroke="#fff" stroke-width="1.4"/>
</svg>
<svg class="a" style="left:231px;top:115px" width="1028" height="585" viewBox="231 115 1028 585">
<g fill="#1a73e8">
<path d="M765 151 L772 155 L765 159 L758 155Z"/>
<path d="M818 128 L825 132 L818 136 L811 132Z"/>
<path d="M720 396 L727 400 L720 404 L713 400Z"/>
<path d="M770 419 L777 423 L770 427 L763 423Z"/>
<path d="M764 455 L771 459 L764 463 L757 459Z"/>
<path d="M373.5 271.5 L376.5 271.5 L376.5 275.5 L380.5 275.5 L380.5 278.5 L376.5 278.5 L376.5 282.5 L373.5 282.5 L373.5 278.5 L369.5 278.5 L369.5 275.5 L373.5 275.5Z"/>
<path d="M370.5 291 L379.5 291 L375 303Z"/>
<path d="M973.5 271.5 L976.5 271.5 L976.5 275.5 L980.5 275.5 L980.5 278.5 L976.5 278.5 L976.5 282.5 L973.5 282.5 L973.5 278.5 L969.5 278.5 L969.5 275.5 L973.5 275.5Z"/>
<path d="M864 274 L871 274 L874 277.5 L871 281 L864 281Z"/>
</g>
<g fill="#2a7ae0" stroke="#0a1a40" stroke-width="0.8">
<rect x="753.5" y="273" width="8" height="8"/><rect x="790.5" y="273" width="8" height="8"/><rect x="362.5" y="461" width="7" height="7"/>
</g>
<g stroke="#1c1488" stroke-width="1.1" fill="none">
<path d="M828 310.5 L857.5 310.5 M863.5 310.5 L893 310.5 M860.5 278 L860.5 307.5 M860.5 313.5 L860.5 343"/>
<rect x="857.5" y="307.5" width="6" height="6" fill="#fff" stroke-width="1.2"/>
</g>
<g stroke="#111" stroke-width="1" fill="none">
<path d="M245.5 653 L245.5 685.5 L279 685.5"/><rect x="242.5" y="682.5" width="6" height="6"/>
<path d="M247 641 L250.5 645 L254 641 M250.5 645 L250.5 649"/>
<path d="M282 676 L290 685 M290 676 L282 685" stroke-width="1.2"/>
</g>
</svg>
<!-- command line -->
<div class="a" style="left:574px;top:644px;width:232px;height:10px;background:rgba(80,80,80,0.85)"></div>
<div class="a" style="left:574px;top:658px;width:40px;height:10px;background:rgba(80,80,80,0.85)"></div>
<div class="a" style="left:574px;top:671px;width:232px;height:10px;background:rgba(80,80,80,0.85)"></div>
<div class="t" style="left:575px;top:644px;font-family:'Liberation Mono',monospace;font-size:7.85px;color:#f0f0f0;letter-spacing:0">Specify point location or [Base point/Undo/eXit]:</div>
<div class="t" style="left:575px;top:658px;font-family:'Liberation Mono',monospace;font-size:7.85px;color:#f0f0f0;letter-spacing:0">Command:</div>
<div class="t" style="left:575px;top:671px;font-family:'Liberation Mono',monospace;font-size:7.85px;color:#f0f0f0;letter-spacing:0">Specify point location or [Base point/Undo/eXit]:</div>
<div class="a" style="left:534px;top:683px;width:422px;height:17px;background:#fff;border:1px solid #8a8a8a"></div>
<div class="a" style="left:534px;top:683px;width:36px;height:17px;background:#7a7a7a"></div>
<svg class="a" style="left:534px;top:683px" width="60" height="17" viewBox="0 0 60 17">
<path d="M4 4 L4 13 M6 4 L6 13" stroke="#bbb" stroke-dasharray="1 1"/>
<path d="M10 6 L15 11 M15 6 L10 11" stroke="#fff" stroke-width="1.4"/>
<path d="M21 5 A3 3 0 1 0 25 9 L30 13" stroke="#fff" stroke-width="1.8" fill="none"/>
<rect x="38" y="4" width="9" height="9" fill="#eee" stroke="#aaa"/><path d="M40 6 L43 8.5 L40 11" stroke="#888" fill="none"/>
<path d="M49 7 L53 7 L51 9Z" fill="#999"/>
</svg>
<div class="t" style="left:594px;top:686px;font-size:8px;color:#b0b0b0;font-style:italic">Type&nbsp; a&nbsp; command</div>
<div class="a" style="left:947px;top:689px;border-left:3px solid transparent;border-right:3px solid transparent;border-bottom:4px solid #222"></div>
<!-- right toolbar -->
<div class="a" style="left:1259px;top:115px;width:21px;height:585px;background:#4d4d4d"></div>
<div class="a" style="left:1260px;top:116px;width:18px;height:422px;background:#383838;border:1px solid #5a5a5a"></div>
<svg class="a" style="left:1259px;top:115px" width="21" height="425" viewBox="1259 115 21 425">
<path d="M1264 123.69999999999999 L1275 123.69999999999999 L1271 128.7 L1275 133.7 L1264 133.7Z" fill="#8a8ab8"/><path d="M1264 123.69999999999999 L1275 123.69999999999999 L1269 128.7Z" fill="#e8e8f0"/>
<path d="M1264 138 L1275 143 L1264 146Z" fill="#dcdce8"/><path d="M1264 148 L1275 148" stroke="#ccc" stroke-dasharray="1 1"/>
<path d="M1266 152.7 Q1274 155.7 1272 162.7 Q1265 159.7 1266 152.7Z" fill="#b8b8b8"/>
<path d="M1265 178 L1265 168 L1275 171 L1265 174" fill="#d8d8d8" stroke="#ddd"/>
<rect x="1264" y="181.8" width="7" height="9" fill="#eee"/><rect x="1270" y="187.8" width="5" height="4" fill="#eee" stroke="#333" stroke-width="0.5"/>
<circle cx="1268.5" cy="200.5" r="4.5" fill="#4aa8a8"/><rect x="1270" y="202" width="5" height="4" fill="#eee" stroke="#333" stroke-width="0.5"/>
<circle cx="1269.5" cy="215.8" r="4.8" fill="#e8e8e8"/><path d="M1264.7 215.8 L1274.3 215.8 M1269.5 210.8 L1269.5 220.8" stroke="#444" stroke-width="0.9"/>
<path d="M1268 226.5 L1272 230.5 L1268 234.5 L1264 230.5Z" fill="none" stroke="#ddd" stroke-width="1.2"/><circle cx="1273.5" cy="234.5" r="1.8" fill="#ddd"/>
<path d="M1264 243 L1274 243" stroke="#ddd"/><circle cx="1269" cy="243" r="2.5" fill="none" stroke="#ddd" stroke-width="1.2"/><path d="M1271 250 L1273 246 L1275 250" stroke="#ddd" fill="none"/>
<path d="M1265 260.5 L1270 255.5 L1270 265.5Z" fill="none" stroke="#ddd" stroke-width="1.2"/><path d="M1271 260.5 L1275 265.5" stroke="#eee" stroke-width="1.5"/>
<circle cx="1268.5" cy="273" r="3" fill="none" stroke="#ddd" stroke-width="1.3"/><path d="M1270 275 L1274 279 L1270 279Z" fill="#eee"/>
<path d="M1265 281.7 L1265 293.7" stroke="#aaa" stroke-width="0.7"/><path d="M1268 293.7 L1274 283.7 L1275 288.7 L1270 293.7Z" fill="#a8c8b8"/>
<path d="M1269 293 L1269 309 M1265 299 L1273 299" stroke="#b04058" stroke-width="1.5"/><path d="M1266 296 L1266 309 M1273 296 L1273 309" stroke="#5a8a7a" stroke-width="0.8"/>
<path d="M1269 318.8 L1273 321.8 L1269 324.8 L1265 321.8Z" fill="none" stroke="#eee" stroke-width="1.2"/><circle cx="1266" cy="326.8" r="1.8" fill="#eee"/><circle cx="1273" cy="326.8" r="1.8" fill="#eee"/>
<path d="M1264 339.8 L1271 339.8 Q1275 341.8 1271 343.8" stroke="#b07080" fill="none" stroke-width="1.3"/><path d="M1268 344.8 L1275 344.8" stroke="#888"/>
<circle cx="1268" cy="353.5" r="2.5" fill="#ddd"/><path d="M1264 358.5 L1274 358.5" stroke="#ccc" stroke-dasharray="1.5 1"/>
<circle cx="1268" cy="367.3" r="2.8" fill="none" stroke="#eee" stroke-width="1.3"/><path d="M1264 372.3 L1274 372.3" stroke="#ccc" stroke-dasharray="1.5 1"/>
<path d="M1265 384 L1265 394 L1275 394 M1265 384 L1271 384 L1271 389" stroke="#ccc" fill="none" stroke-dasharray="1.5 1"/>
<path d="M1265 408 L1274 398" stroke="#ccc"/><circle cx="1267" cy="402" r="2" fill="none" stroke="#ddd"/><rect x="1271" y="403" width="3" height="3" fill="#eee"/>
<path d="M1264 423 L1264 413 L1275 413 L1275 423Z" fill="#7078b8"/><path d="M1264 423 L1275 413" stroke="#ddd"/>
<circle cx="1267" cy="429" r="1.8" fill="#ddd"/><path d="M1264 434 L1275 434" stroke="#ddd" stroke-width="1.2"/>
<circle cx="1269.5" cy="447.6" r="5" fill="#d8d4d0"/><path d="M1265 449.6 L1273 444.6" stroke="#7a5a40" stroke-width="1.2"/>
<path d="M1264 463 L1275 458 L1275 465 L1264 467Z" fill="#a07040"/><path d="M1266 457 L1272 457" stroke="#ddd"/>
<path d="M1265 482 Q1266 472 1275 472" stroke="#ddd" fill="none" stroke-width="1.2"/><rect x="1271" y="477" width="4" height="5" fill="#5a6ab8"/>
<path d="M1269 495 L1273 498 L1269 501 L1265 498Z" fill="none" stroke="#eee" stroke-width="1.3"/><circle cx="1266" cy="503" r="1.8" fill="#eee"/><circle cx="1272" cy="504" r="1.5" fill="#ddd"/>
<rect x="1264" y="509" width="7" height="8" fill="#eee"/><path d="M1264 518 L1269 518" stroke="#ddd"/><rect x="1271" y="515" width="4" height="4" fill="#ddd"/>
<circle cx="1269" cy="524.7" r="2.2" fill="none" stroke="#eee" stroke-width="1.2"/><path d="M1264 529.7 L1270 529.7" stroke="#ddd" stroke-dasharray="1 1"/><rect x="1271" y="528.7" width="4" height="4" fill="#ddd"/>
<rect x="1262" y="312.5" width="15" height="1.2" fill="#c8c8c8"/>
<rect x="1262" y="332.1" width="15" height="1.2" fill="#c8c8c8"/>
<rect x="1262" y="380.2" width="15" height="1.2" fill="#c8c8c8"/>
<rect x="1262" y="487.5" width="15" height="1.2" fill="#c8c8c8"/>
</svg>
<!-- layout tabs + status bar -->
<div class="a" style="left:0;top:700px;width:1280px;height:20px;background:#2e2e2e"></div>
<svg class="a" style="left:0;top:700px" width="160" height="13" viewBox="0 0 160 13">
<path d="M8 12 L11 2 Q12 1 14 1 L44 1 Q46 1 46 3 L44 12Z" fill="#6e6e6e"/>
<path d="M46 12 L49 2 Q50 1 52 1 L87 1 Q89 1 89 3 L87 12Z" fill="#4e4e4e"/>
<path d="M89 12 L92 2 Q93 1 95 1 L129 1 Q131 1 131 3 L129 12Z" fill="#4e4e4e"/>
<circle cx="143" cy="6.5" r="6" fill="#4a4a4a"/><path d="M140 6.5 L146 6.5 M143 3.5 L143 9.5" stroke="#eee" stroke-width="1.4"/>
</svg>
<div class="t" style="left:15.5px;top:702px;font-size:8.4px;color:#fff;font-weight:bold;letter-spacing:-0.2px">Model</div>
<div class="t" style="left:54px;top:702px;font-size:8.4px;color:#d0d0d0">Layout1</div>
<div class="t" style="left:97px;top:702px;font-size:8.4px;color:#d0d0d0">Layout2</div>
<div class="a" style="left:523px;top:700px;width:757px;height:16px;background:#464646"></div>
<div class="a" style="left:0;top:716px;width:1280px;height:4px;background:#343434"></div>
<div class="a" style="left:35px;top:717px;width:1245px;height:3px;background:#565656"></div>
<div class="a" style="left:556px;top:701px;width:1px;height:14px;background:#5e5e5e"></div><div class="a" style="left:593.5px;top:701px;width:1px;height:14px;background:#5e5e5e"></div><div class="a" style="left:650px;top:701px;width:1px;height:14px;background:#5e5e5e"></div><div class="a" style="left:717px;top:701px;width:1px;height:14px;background:#5e5e5e"></div><div class="a" style="left:840px;top:701px;width:1px;height:14px;background:#5e5e5e"></div><div class="a" style="left:873px;top:701px;width:1px;height:14px;background:#5e5e5e"></div><div class="a" style="left:916px;top:701px;width:1px;height:14px;background:#5e5e5e"></div><div class="a" style="left:956.5px;top:701px;width:1px;height:14px;background:#5e5e5e"></div><div class="a" style="left:1067px;top:701px;width:1px;height:14px;background:#5e5e5e"></div><div class="a" style="left:1094px;top:701px;width:1px;height:14px;background:#5e5e5e"></div><div class="a" style="left:1112.5px;top:701px;width:1px;height:14px;background:#5e5e5e"></div><div class="a" style="left:1128px;top:701px;width:1px;height:14px;background:#5e5e5e"></div><div class="a" style="left:1149px;top:701px;width:1px;height:14px;background:#5e5e5e"></div><div class="a" style="left:1196px;top:701px;width:1px;height:14px;background:#5e5e5e"></div><div class="a" style="left:1246px;top:701px;width:1px;height:14px;background:#5e5e5e"></div>
<svg class="a" style="left:523px;top:700px" width="757" height="16" viewBox="523 700 757 16">
<g stroke="#e0e0e0" fill="none" stroke-width="1">
<path d="M528 703 L528 713 L540 713" stroke="#3a7ae0" stroke-width="1.3"/>
<path d="M545 713 L545 703 M545 713 L554 707 M545 713 L553 715" />
<path d="M565 703 L559 713 L571 713Z"/><path d="M565 706 L565 713"/>
<circle cx="602" cy="708" r="5"/><path d="M599 705 Q603 707 600 711 M604 704 Q606 708 604 712"/>
<path d="M656 703 L662 703 L665 706 L665 714 L656 714Z"/><path d="M658 708 L663 708 M658 711 L663 711"/>
<path d="M877 703 L877 713 L887 713" />
<circle cx="898" cy="708" r="4.5"/>
<path d="M920 713 L930 703 M920 713 L931 713"/>
<rect x="937" y="703" width="9" height="10"/>
<path d="M1125 712 L1118 712 L1118 707 M1113 704 L1120 704 L1120 709" />
<path d="M1096 708 L1105 708 M1100.5 703 L1100.5 713" stroke-width="1.4"/>
<rect x="1251" y="703" width="11" height="10"/><path d="M1254 711 L1259 706" />
<path d="M1266 704 L1277 704 M1266 708 L1277 708 M1266 712 L1277 712" stroke-width="1.6"/>
</g>
<path d="M707 707 L707 704 Q710 701 713 704 L713 707Z" fill="none" stroke="#4a90e0" stroke-width="1.3"/><rect x="705.5" y="707" width="9" height="7" fill="#3a80e0"/>
<path d="M960 704 L972 704 M960 708 L970 708 M960 712 L972 712" stroke="#3a8ae8" stroke-width="1.8"/>
<g fill="#4a8ae8"><circle cx="983" cy="704" r="2.5"/><path d="M977 713 L983 706 L989 713 L986 713 L983 709 L980 713Z"/></g>
<g fill="#e0e0e0"><circle cx="1005" cy="704" r="2.2"/><path d="M999 713 L1005 706 L1011 713 L1008 713 L1005 709 L1002 713Z"/>
<circle cx="1024" cy="704" r="2.2"/><path d="M1018 713 L1024 706 L1030 713 L1027 713 L1024 709 L1021 713Z"/>
<path d="M1070 704 L1078 704 L1078 712 L1070 712Z"/></g>
<circle cx="1138.5" cy="708" r="6.5" fill="#2a6ad8"/><path d="M1137 711 L1140 705" stroke="#cde" stroke-width="0.8"/>
<ellipse cx="1158" cy="708" rx="5" ry="5" fill="#8a8a7a"/><ellipse cx="1158" cy="708" rx="3" ry="2" fill="#ddd"/>
<rect x="1203" y="703" width="9" height="9" fill="#ddd"/><rect x="1205" y="706" width="4" height="3" fill="#333"/><path d="M1209 714 L1211 710 L1213 714Z" fill="#e0c040"/>
<path d="M1228 702 L1235 714 L1221 714Z" fill="#e8e8e8"/><rect x="1227.5" y="706" width="1" height="5" fill="#333"/>
<rect x="1237" y="704" width="10" height="9" fill="#3a6ad8"/><rect x="1238" y="709" width="9" height="4" fill="#c8d840"/>
<path d="M1084 706 L1090 706 L1087 709Z M586 706 L592 706 L589 709Z M643 706 L649 706 L646 709Z M700 706 L706 706 L703 709Z M909 706 L915 706 L912 709Z M951 706 L957 706 L954 709Z M1061 706 L1067 706 L1064 709Z" fill="#ddd"/>
</svg>
<div class="t" style="left:575px;top:704px;font-size:8.8px;color:#f0f0f0">1x</div>
<div class="t" style="left:611px;top:704px;font-size:8.8px;color:#f0f0f0">&lt;none&gt;</div>
<div class="t" style="left:668px;top:704px;font-size:8.8px;color:#f0f0f0">1: 126.7</div>
<div class="t" style="left:732px;top:704px;font-size:8.8px;color:#f0f0f0;letter-spacing:-0.45px">1203.3181, 938.8352, 0.0000</div>
<div class="t" style="left:843px;top:704px;font-size:8px;color:#f0f0f0;letter-spacing:-0.2px">MODEL</div>
<div class="t" style="left:1034px;top:704px;font-size:8.8px;color:#f0f0f0;letter-spacing:-0.3px">1" = 10'</div>
<div class="t" style="left:1168px;top:704px;font-size:8.8px;color:#f0f0f0;letter-spacing:-0.1px">3.5000</div>
</body></html>
